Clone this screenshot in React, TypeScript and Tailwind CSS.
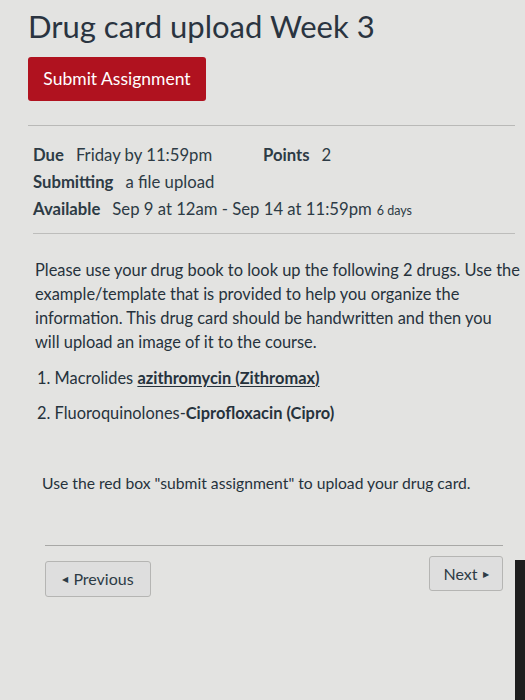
export default function App() {
  return (
    <div className="flex h-[700px] w-[525px] overflow-hidden bg-[#e3e3e1] font-['Lato','Open_Sans',sans-serif] text-[#2d3b45]">
      <div className="flex min-w-0 flex-1 flex-col pl-[28px] pt-[4px]">
        <h1 className="text-[31px] leading-[44px] text-[#2a3440]">Drug card upload Week 3</h1>

        <div className="mt-[9px]">
          <button
            type="button"
            className="h-[44px] w-[178px] rounded-[3px] bg-[#b0121f] text-[17.5px] text-white"
          >
            Submit Assignment
          </button>
        </div>

        <div className="mt-[24px] h-px bg-[#b9b9b7]" />

        <div className="mt-[18px] space-y-[4px] pl-[5px] text-[16.7px] leading-[23px]">
          <div className="flex">
            <span className="w-[230px]">
              <span className="font-bold">Due</span>
              <span className="ml-[12px]">Friday by 11:59pm</span>
            </span>
            <span>
              <span className="font-bold">Points</span>
              <span className="ml-[12px]">2</span>
            </span>
          </div>
          <div>
            <span className="font-bold">Submitting</span>
            <span className="ml-[12px]">a file upload</span>
          </div>
          <div>
            <span className="font-bold">Available</span>
            <span className="ml-[12px]">Sep 9 at 12am - Sep 14 at 11:59pm</span>
            <span className="ml-[5px] text-[12.5px]">6 days</span>
          </div>
        </div>

        <div className="ml-[5px] mt-[11px] h-px bg-[#bdbdbb]" />

        <div className="mt-[24px] pl-[7px] text-[16.4px] leading-[24px] text-[#26323c]">
          <p className="w-[488px]">
            Please use your drug book to look up the following 2 drugs. Use the
            <br />
            example/template that is provided to help you organize the
            <br />
            information. This drug card should be handwritten and then you
            <br />
            will upload an image of it to the course.
          </p>
          <ol className="mt-[12px] space-y-[11px] pl-[2px]">
            <li>
              1. Macrolides <span className="font-bold underline underline-offset-2">azithromycin (Zithromax)</span>
            </li>
            <li>
              2. Fluoroquinolones-<span className="font-bold">Ciprofloxacin (Cipro)</span>
            </li>
          </ol>
          <p className="mt-[46px] pl-[7px] text-[15.7px]">
            Use the red box "submit assignment" to upload your drug card.
          </p>
        </div>

        <div className="ml-[17px] mr-[12px] mt-[50px] h-px bg-[#a8a8a6]" />

        <div className="ml-[17px] mr-[12px] mt-[10px] flex items-start justify-between">
          <button
            type="button"
            className="mt-[5px] flex h-[36px] w-[106px] items-center justify-center gap-[5px] rounded-[3px] border border-[#b5b5b3] bg-[#dedede] text-[16px] text-[#2d3b45]"
          >
            <span className="text-[8px]">◀</span>
            Previous
          </button>
          <button
            type="button"
            className="flex h-[35px] w-[74px] items-center justify-center gap-[5px] rounded-[3px] border border-[#b5b5b3] bg-[#dedede] text-[16px] text-[#2d3b45]"
          >
            Next
            <span className="text-[8px]">▶</span>
          </button>
        </div>
      </div>
      <div className="mt-[560px] w-[10px] bg-[#1e1e1e]" />
    </div>
  )
}
